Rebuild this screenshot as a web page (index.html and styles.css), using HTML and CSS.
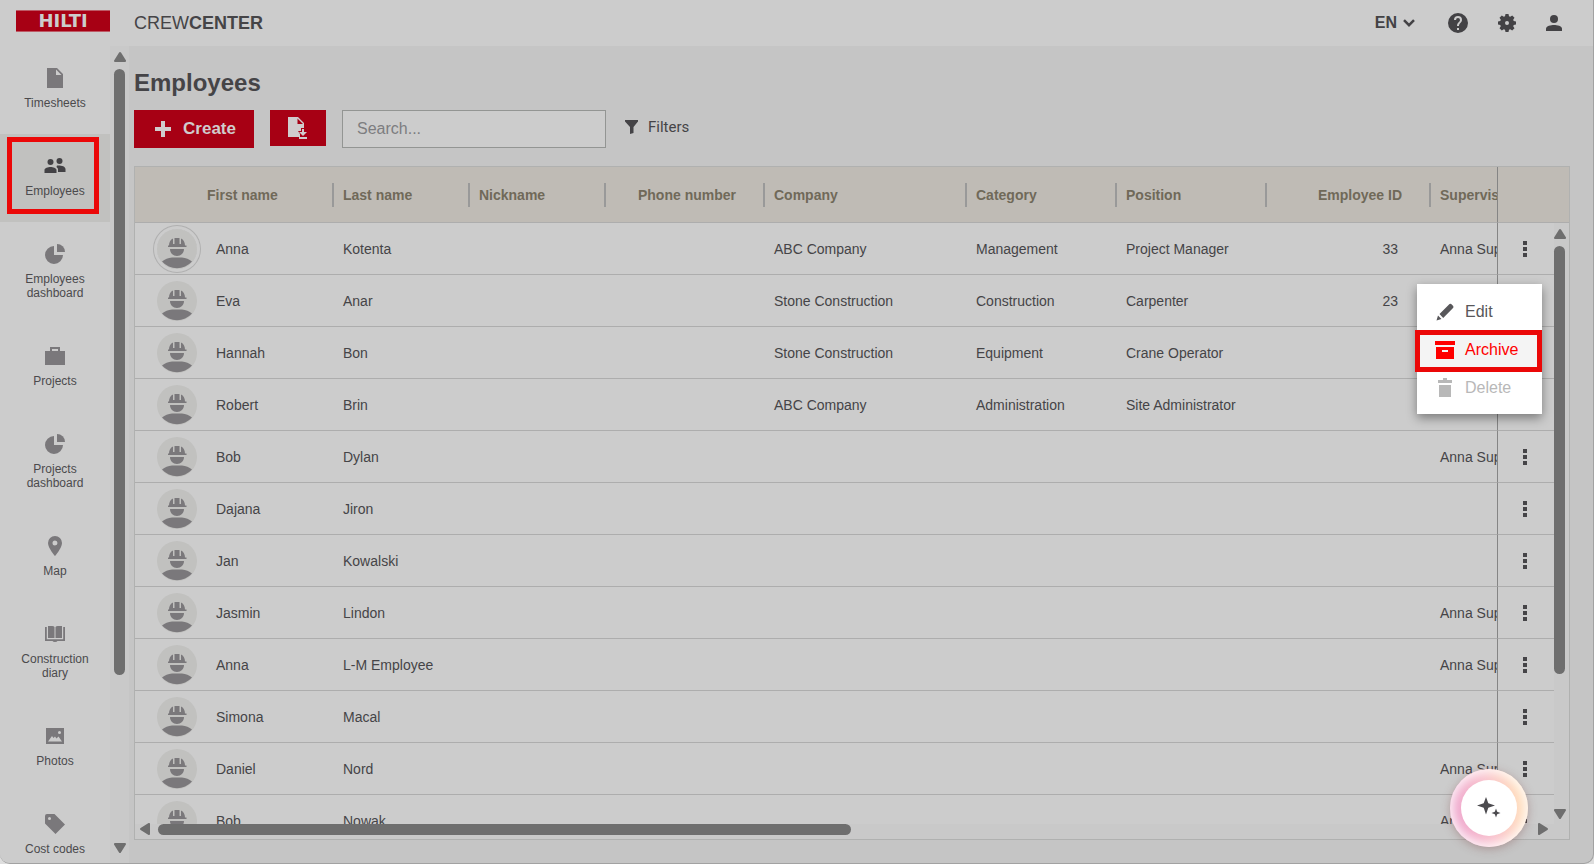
FILE: index.html
```html
<!DOCTYPE html>
<html lang="en">
<head>
    <meta charset="UTF-8">
    <meta name="viewport" content="width=device-width, initial-scale=1.0">
    <title>Crewcenter - Employees</title>
    <link rel="stylesheet" href="styles.css">
</head>
<body>
    <!-- Shared icons -->
    <svg class="sprite" aria-hidden="true">
        <symbol id="i-pie" viewBox="0 0 20 20">
            <path d="M9 2v9h9a9 9 0 1 1-9-9z"/>
            <path d="M12 0a8 8 0 0 1 8 8h-8z"/>
        </symbol>
        <symbol id="i-worker" viewBox="0 0 40 40">
            <circle cx="20" cy="20" r="20" fill="#c1c1bf"/>
            <path d="M11 18v-1.500h1c0-3 1.500-6 4-7V15h1.500V9h5v6H24V9.500c2.500 1 4 4 4 7h1.500V18H11zM13 20h14c0 4-3 7-7 7s-7-3-7-7z"/>
            <path d="M5 32.500c3-2.500 6-3.500 10-4h10c4 .5 7 1.500 10 4A20 20 0 0 1 5 32.500z"/>
        </symbol>
        <symbol id="i-dots" viewBox="0 0 4 16">
            <path d="M0 0h4v4H0zM0 6h4v4H0zM0 12h4v4H0z"/>
        </symbol>
        <symbol id="i-arrow" viewBox="0 0 12 10">
            <path d="M6 0q.6 0 1 .6l5 8Q12.200 10 11 10H1Q-.2 10 .1 8.600l5-8Q5.400 0 6 0z"/>
        </symbol>
    </svg>

    <div class="app">
        <header class="topbar">
            <a class="logo" href="#">HILTI</a>
            <span class="product">CREW<b>CENTER</b></span>
            <div class="topbar-tools">
                <button class="lang" type="button">EN
                    <svg width="12" height="8" viewBox="0 0 12 8"><path d="M1 1.200l5 5 5-5" fill="none" stroke="currentColor" stroke-width="2.500"/></svg>
                </button>
                <button type="button" aria-label="Help">
                    <svg width="20" height="20" viewBox="2 2 20 20"><path d="M12 2a10 10 0 1 0 0 20 10 10 0 0 0 0-20zm1 17h-2v-2h2zm2.070-7.750-.9.920C13.450 12.900 13 13.500 13 15h-2v-.5c0-1.100.45-2.100 1.170-2.830l1.240-1.260c.37-.36.59-.86.59-1.410a2 2 0 0 0-4 0H8a4 4 0 0 1 8 0c0 .88-.36 1.680-.93 2.250z"/></svg>
                </button>
                <button type="button" aria-label="Settings">
                    <svg width="18" height="18" viewBox="0 0 18 18"><path fill-rule="evenodd" d="M7.500 0h3l.5 2.300 1.200.5L14.200 1.500l2.300 2.300-1.300 2 .5 1.200 2.300.5v3l-2.300.5-.5 1.200 1.300 2-2.300 2.300-2-1.300-1.200.5-.5 2.300h-3L7 15.700l-1.200-.5-2 1.300-2.300-2.300 1.300-2L2.300 11 0 10.500v-3L2.300 7l.5-1.200-1.300-2 2.300-2.300 2 1.300L7 2.300zM9 7a2 2 0 1 0 0 4 2 2 0 0 0 0-4z"/></svg>
                </button>
                <button type="button" aria-label="Account">
                    <svg width="16" height="16" viewBox="0 0 16 16"><circle cx="8" cy="4" r="4"/><path d="M0 16v-2.500C0 11 5 10 8 10s8 1 8 3.500V16z"/></svg>
                </button>
            </div>
        </header>

        <div class="layout">
            <nav class="sidebar">
                <a class="nav-item" href="#">
                    <svg viewBox="0 0 20 20"><path fill-rule="evenodd" d="M2 0h10l6 6v14H2zM11 1.500V7h5.500z"/></svg>
                    <span>Timesheets</span>
                </a>
                <a class="nav-item active marked" href="#">
                    <svg class="wide" viewBox="0 0 22 20"><circle cx="6.500" cy="6" r="3"/><circle cx="15.500" cy="5" r="3"/><path d="M.5 17v-3c0-2 3.500-3 6-3s6 1 6 3v3zM13 9.500c3-.5 8.500.5 8.500 3.500v3H14v-2.500c0-1.500-1-2-1.500-2.500z"/></svg>
                    <span>Employees</span>
                </a>
                <a class="nav-item" href="#">
                    <svg><use href="#i-pie"/></svg>
                    <span>Employees dashboard</span>
                </a>
                <a class="nav-item" href="#">
                    <svg viewBox="0 0 20 20"><path fill-rule="evenodd" d="M5 1h10v4h5v14H0V5h5zM7 3v2h6V3z"/></svg>
                    <span>Projects</span>
                </a>
                <a class="nav-item" href="#">
                    <svg><use href="#i-pie"/></svg>
                    <span>Projects dashboard</span>
                </a>
                <a class="nav-item" href="#">
                    <svg viewBox="0 0 20 20"><path fill-rule="evenodd" d="M10 0a7 7 0 0 1 7 7c0 5-7 13-7 13S3 12 3 7a7 7 0 0 1 7-7zm0 4.500a2.500 2.500 0 1 0 0 5 2.500 2.500 0 0 0 0-5z"/></svg>
                    <span>Map</span>
                </a>
                <a class="nav-item" href="#">
                    <svg viewBox="0 0 20 20"><path d="M3 2h4q2 0 2.500 1v11Q9 14 7 14H3zM17 2h-4q-2 0-2.500 1v11q.5 0 2.500 0h4zM0 3h1.800v12.200h16.400V3H20v14h-7.500q-.5 1-2.500 1t-2.500-1H0z"/></svg>
                    <span>Construction diary</span>
                </a>
                <a class="nav-item" href="#">
                    <svg viewBox="0 0 20 20"><path fill-rule="evenodd" d="M1 2h18v16H1zM3 15.500h14l-3.500-5-2 2-1.500-2-1.500 1.500-1.500-2zM14.500 5a1.500 1.500 0 1 0 0 3 1.500 1.500 0 0 0 0-3z"/></svg>
                    <span>Photos</span>
                </a>
                <a class="nav-item" href="#">
                    <svg viewBox="0 0 20 20"><path fill-rule="evenodd" d="M2 0h7.500L20 10.500 10.500 20 0 9.500V2q0-2 2-2zm2.500 3a1.500 1.500 0 1 0 0 3 1.500 1.500 0 0 0 0-3z"/></svg>
                    <span>Cost codes</span>
                </a>
            </nav>
            <div class="scroll-v scroll-nav">
                <svg class="arrow"><use href="#i-arrow"/></svg>
                <div class="track"><div class="thumb"></div></div>
                <svg class="arrow down"><use href="#i-arrow"/></svg>
            </div>

            <main class="content">
                <h1>Employees</h1>
                <div class="toolbar">
                    <button class="btn btn-create" type="button">
                        <svg width="16" height="16" viewBox="0 0 16 16"><path d="M6 0h4v6h6v4h-6v6H6v-6H0V6h6z"/></svg>
                        Create
                    </button>
                    <button class="btn btn-export" type="button" aria-label="Export">
                        <svg width="20" height="22" viewBox="0 0 20 22"><path fill-rule="evenodd" d="M0 0h10l6 6v5h-3v3h-3l2 3v3H0zM9.500 1.500V7H15z"/><path d="M14 12h2v3h3l-4 4-4-4h3zM11 20h8v2h-8z"/></svg>
                    </button>
                    <input class="search" type="text" placeholder="Search..." aria-label="Search">
                    <button class="filters" type="button">
                        <svg width="13" height="14" viewBox="0 0 13 14"><path d="M0 0h13v1.500L8.500 7v6L5 14V7L0 1.500z"/></svg>
                        Filters
                    </button>
                </div>

                <div class="frame">
                    <div class="view">
                        <table class="employees">
                            <colgroup>
                                <col class="c-first"><col class="c-name"><col class="c-name"><col class="c-phone"><col class="c-company"><col class="c-mid"><col class="c-mid"><col class="c-id"><col><col class="c-actions"><col class="c-scroll">
                            </colgroup>
                            <thead>
                                <tr>
                                    <th class="first">First name</th>
                                    <th>Last name</th>
                                    <th>Nickname</th>
                                    <th class="num">Phone number</th>
                                    <th>Company</th>
                                    <th>Category</th>
                                    <th>Position</th>
                                    <th class="num">Employee ID</th>
                                    <th class="last">Supervisor</th>
                                    <th class="actions"></th>
                                    <th class="gutter"></th>
                                </tr>
                            </thead>
                            <tbody>
                                <tr>
                                    <td><div class="person"><svg class="avatar ring"><use href="#i-worker"/></svg>Anna</div></td>
                                    <td>Kotenta</td><td></td><td></td><td>ABC Company</td><td>Management</td><td>Project Manager</td><td class="num">33</td><td>Anna Supervisor</td>
                                    <td class="actions"><button type="button" aria-label="Actions"><svg><use href="#i-dots"/></svg></button></td><td class="gutter"></td>
                                </tr>
                                <tr>
                                    <td><div class="person"><svg class="avatar"><use href="#i-worker"/></svg>Eva</div></td>
                                    <td>Anar</td><td></td><td></td><td>Stone Construction</td><td>Construction</td><td>Carpenter</td><td class="num">23</td><td></td>
                                    <td class="actions"></td><td class="gutter"></td>
                                </tr>
                                <tr>
                                    <td><div class="person"><svg class="avatar"><use href="#i-worker"/></svg>Hannah</div></td>
                                    <td>Bon</td><td></td><td></td><td>Stone Construction</td><td>Equipment</td><td>Crane Operator</td><td></td><td></td>
                                    <td class="actions"></td><td class="gutter"></td>
                                </tr>
                                <tr>
                                    <td><div class="person"><svg class="avatar"><use href="#i-worker"/></svg>Robert</div></td>
                                    <td>Brin</td><td></td><td></td><td>ABC Company</td><td>Administration</td><td>Site Administrator</td><td></td><td></td>
                                    <td class="actions"></td><td class="gutter"></td>
                                </tr>
                                <tr>
                                    <td><div class="person"><svg class="avatar"><use href="#i-worker"/></svg>Bob</div></td>
                                    <td>Dylan</td><td></td><td></td><td></td><td></td><td></td><td></td><td>Anna Supervisor</td>
                                    <td class="actions"><button type="button" aria-label="Actions"><svg><use href="#i-dots"/></svg></button></td><td class="gutter"></td>
                                </tr>
                                <tr>
                                    <td><div class="person"><svg class="avatar"><use href="#i-worker"/></svg>Dajana</div></td>
                                    <td>Jiron</td><td></td><td></td><td></td><td></td><td></td><td></td><td></td>
                                    <td class="actions"><button type="button" aria-label="Actions"><svg><use href="#i-dots"/></svg></button></td><td class="gutter"></td>
                                </tr>
                                <tr>
                                    <td><div class="person"><svg class="avatar"><use href="#i-worker"/></svg>Jan</div></td>
                                    <td>Kowalski</td><td></td><td></td><td></td><td></td><td></td><td></td><td></td>
                                    <td class="actions"><button type="button" aria-label="Actions"><svg><use href="#i-dots"/></svg></button></td><td class="gutter"></td>
                                </tr>
                                <tr>
                                    <td><div class="person"><svg class="avatar"><use href="#i-worker"/></svg>Jasmin</div></td>
                                    <td>Lindon</td><td></td><td></td><td></td><td></td><td></td><td></td><td>Anna Supervisor</td>
                                    <td class="actions"><button type="button" aria-label="Actions"><svg><use href="#i-dots"/></svg></button></td><td class="gutter"></td>
                                </tr>
                                <tr>
                                    <td><div class="person"><svg class="avatar"><use href="#i-worker"/></svg>Anna</div></td>
                                    <td>L-M Employee</td><td></td><td></td><td></td><td></td><td></td><td></td><td>Anna Supervisor</td>
                                    <td class="actions"><button type="button" aria-label="Actions"><svg><use href="#i-dots"/></svg></button></td><td class="gutter"></td>
                                </tr>
                                <tr>
                                    <td><div class="person"><svg class="avatar"><use href="#i-worker"/></svg>Simona</div></td>
                                    <td>Macal</td><td></td><td></td><td></td><td></td><td></td><td></td><td></td>
                                    <td class="actions"><button type="button" aria-label="Actions"><svg><use href="#i-dots"/></svg></button></td><td class="gutter"></td>
                                </tr>
                                <tr>
                                    <td><div class="person"><svg class="avatar"><use href="#i-worker"/></svg>Daniel</div></td>
                                    <td>Nord</td><td></td><td></td><td></td><td></td><td></td><td></td><td>Anna Supervisor</td>
                                    <td class="actions"><button type="button" aria-label="Actions"><svg><use href="#i-dots"/></svg></button></td><td class="gutter"></td>
                                </tr>
                                <tr>
                                    <td><div class="person"><svg class="avatar"><use href="#i-worker"/></svg>Bob</div></td>
                                    <td>Nowak</td><td></td><td></td><td></td><td></td><td></td><td></td><td>Anna Supervisor</td>
                                    <td class="actions"><button type="button" aria-label="Actions"><svg><use href="#i-dots"/></svg></button></td><td class="gutter"></td>
                                </tr>
                            </tbody>
                        </table>
                        <div class="scroll-v scroll-table">
                            <svg class="arrow"><use href="#i-arrow"/></svg>
                            <div class="track"><div class="thumb"></div></div>
                            <svg class="arrow down"><use href="#i-arrow"/></svg>
                        </div>
                    </div>
                    <div class="scroll-h">
                        <svg class="arrow left"><use href="#i-arrow"/></svg>
                        <div class="track"><div class="thumb"></div></div>
                        <svg class="arrow right"><use href="#i-arrow"/></svg>
                    </div>

                    <div class="menu">
                        <button type="button">
                            <svg viewBox="0 0 20 20"><path d="M1.500 18.500L3 13.500l3.500 3.500zM4.500 12L14 2.500q1-1.200 2.200-.4l2 2q.8 1.200-.4 2.200L8.200 16z"/></svg>
                            Edit
                        </button>
                        <button class="archive" type="button">
                            <svg viewBox="0 0 20 20"><path fill-rule="evenodd" d="M0 1h20v4H0zM1 7h18v12H1zM7 10v2h6v-2z"/></svg>
                            Archive
                        </button>
                        <button type="button" disabled>
                            <svg viewBox="0 0 20 20"><path d="M3 2h5V0h4v2h5v3H3zM4 7h12v12H4z"/></svg>
                            Delete
                        </button>
                    </div>
                </div>
            </main>
        </div>
        <button class="assistant" type="button" aria-label="Assistant">
            <span><svg width="24" height="22" viewBox="0 0 24 22"><path d="M9 0l2.300 6.200L18 8.500l-6.700 2.300L9 17.500l-2.300-6.700L0 8.500l6.700-2.300zM19 11.500l1.200 3.300 3.300 1.200-3.300 1.200L19 20.500l-1.200-3.300-3.300-1.200 3.300-1.200z"/></svg></span>
        </button>
    </div>
</body>
</html>
```
FILE: styles.css
```css
* {
    box-sizing: border-box;
}
body {
    margin: 0;
    background-color: #dedede;
    color: #454447;
    font-family: "Liberation Sans", Arial, sans-serif;
    font-size: 14px;
}
button {
    padding: 0;
    border: 0;
    background: none;
    color: inherit;
    font: inherit;
    cursor: pointer;
}
svg {
    display: block;
    flex: none;
    fill: currentColor;
}
.sprite {
    position: absolute;
    width: 0;
    height: 0;
}
.app {
    height: 100vh;
    display: flex;
    flex-direction: column;
    overflow: hidden;
    background-color: #c5c5c5;
    border: solid #a2a2a2;
    border-width: 0 1px 1px 0;
    border-radius: 0 0 10px 10px;
}

/* Top bar */
.topbar {
    flex: none;
    height: 46px;
    display: flex;
    align-items: center;
    padding: 0 31px 0 16px;
    background-color: #ccc;
}
.logo {
    width: 94px;
    height: 22px;
    margin: 0 24px 4px 0;
    border: solid #bd5a66;
    border-width: 1px 0;
    background-color: #a70014;
    color: #ccc;
    font: bold 18px/20px "DejaVu Sans", sans-serif;
    text-align: center;
    text-decoration: none;
}
.product {
    font-size: 18px;
}
.topbar-tools {
    margin-left: auto;
    display: flex;
    align-items: center;
    gap: 30px;
    color: #434245;
}
.lang {
    display: flex;
    align-items: center;
    gap: 6px;
    margin-right: 3px;
    font-size: 16px;
    font-weight: bold;
}

/* Sidebar */
.layout {
    flex: 1;
    min-height: 0;
    display: flex;
}
.sidebar {
    flex: none;
    width: 110px;
    overflow: hidden;
    background-color: #ccc;
}
.nav-item {
    position: relative;
    display: flex;
    flex-direction: column;
    align-items: center;
    gap: 8px;
    padding: 22px 16px 24px;
    color: #4b4a4c;
    font-size: 12px;
    line-height: 14px;
    text-align: center;
    text-decoration: none;
}
.nav-item svg {
    width: 20px;
    height: 20px;
    color: #7a787b;
}
.nav-item svg.wide {
    width: 22px;
}
.nav-item.active {
    background-color: #c1c1bf;
}
.nav-item.active svg {
    color: #434245;
}
.marked::after {
    content: "";
    position: absolute;
    inset: 3px 11px 8px 7px;
    border: 5px solid #eb0808;
}

/* Scrollbars */
.scroll-v {
    display: flex;
    flex-direction: column;
    align-items: center;
    background-color: #c9c9c9;
    color: #6e6e6e;
}
.arrow {
    width: 12px;
    height: 10px;
}
.arrow.down {
    transform: rotate(180deg);
}
.arrow.left {
    transform: rotate(-90deg);
}
.arrow.right {
    transform: rotate(90deg);
}
.track {
    flex: 1;
}
.thumb {
    width: 11px;
    border-radius: 6px;
    background-color: #6e6e6e;
}
.scroll-nav {
    flex: none;
    width: 19px;
    padding: 6px 0 10px;
}
.scroll-nav .track {
    padding: 7px 0;
}
.scroll-nav .thumb {
    height: 79%;
}
.scroll-table {
    position: absolute;
    top: 56px;
    right: 0;
    bottom: 0;
    width: 15px;
    align-items: flex-start;
    padding: 6px 0 5px;
}
.scroll-table .track {
    padding: 7px 0;
}
.scroll-table .thumb {
    height: 77%;
}
.scroll-h {
    flex: none;
    height: 15px;
    display: flex;
    padding: 0 20px 0 4px;
    background-color: #c9c9c9;
    color: #6e6e6e;
}
.scroll-h .track {
    padding: 0 20px 0 7px;
}
.scroll-h .thumb {
    width: 51%;
    height: 11px;
}

/* Page content */
.content {
    flex: 1;
    min-width: 0;
    display: flex;
    flex-direction: column;
    padding: 22px 23px 23px 5px;
}
h1 {
    margin: 0 0 12px;
    font-size: 24px;
    line-height: 30px;
}
.toolbar {
    display: flex;
    align-items: flex-start;
    gap: 16px;
    margin-bottom: 18px;
}
.btn {
    display: flex;
    align-items: center;
    justify-content: center;
    background-color: #a70014;
    color: #d0cccd;
}
.btn-create {
    width: 120px;
    height: 38px;
    padding-left: 3px;
    gap: 12px;
    font-size: 17px;
    font-weight: bold;
}
.btn-export {
    width: 56px;
    height: 36px;
}
.search {
    width: 264px;
    height: 38px;
    padding: 0 14px;
    border: 1px solid #939593;
    border-radius: 0;
    background-color: #ccc;
    color: #454447;
    font: inherit;
    font-size: 16px;
}
.search::placeholder {
    color: #7d7d80;
}
.filters {
    height: 34px;
    display: flex;
    align-items: center;
    gap: 10px;
    margin-left: 3px;
    font-family: Roboto, sans-serif;
    font-size: 15px;
}

/* Employee table */
.frame {
    position: relative;
    flex: 1;
    min-height: 0;
    display: flex;
    flex-direction: column;
    border: 1px solid #b0b1b0;
    background-color: #ccc;
}
.view {
    position: relative;
    flex: 1;
    min-height: 0;
    overflow: hidden;
}
.employees {
    width: 100%;
    table-layout: fixed;
    border-collapse: separate;
    border-spacing: 0;
}
.c-first { width: 199px; }
.c-name { width: 136px; }
.c-phone { width: 159px; }
.c-company { width: 202px; }
.c-mid { width: 150px; }
.c-id { width: 164px; }
.c-actions { width: 57px; }
.c-scroll { width: 15px; }
.employees th,
.employees td {
    padding: 0 0 0 9px;
    overflow: hidden;
    border-bottom: 1px solid #adadad;
    text-align: left;
    white-space: nowrap;
}
.employees th {
    height: 56px;
    background: linear-gradient(#999, #999) right center / 2px 24px no-repeat #bfbbb5;
    color: #706959;
}
.employees td {
    height: 52px;
}
.employees th.first {
    padding-left: 72px;
}
.employees th.last,
.employees th.actions,
.employees th.gutter {
    background-image: none;
}
.employees th.num {
    padding-right: 29px;
    text-align: right;
}
.employees td.num {
    padding-right: 33px;
    text-align: right;
}
.employees .actions {
    padding: 0 2px 0 0;
    border-left: 1px solid #858585;
}
.employees td.gutter {
    border-bottom: 0;
}
.employees td:first-child {
    padding-left: 22px;
}
.person {
    display: flex;
    align-items: center;
    gap: 19px;
}
.avatar {
    width: 40px;
    height: 40px;
    color: #7a787b;
}
.avatar.ring {
    border-radius: 50%;
    box-shadow: 0 0 0 3px #ccc, 0 0 0 4px #b0b0b0;
}
.actions button {
    display: flex;
    align-items: center;
    justify-content: center;
    width: 100%;
    height: 40px;
}
.actions svg {
    width: 4px;
    height: 16px;
}

/* Row menu */
.menu {
    position: absolute;
    top: 117px;
    right: 27px;
    width: 125px;
    padding: 9px 0 7px;
    background-color: #fff;
    box-shadow: 0 4px 10px rgba(0,0,0,0.4);
}
.menu button {
    position: relative;
    display: flex;
    align-items: center;
    gap: 10px;
    width: 100%;
    height: 38px;
    padding: 0 18px;
    color: #58575a;
    font-size: 16px;
}
.menu svg {
    width: 20px;
    height: 20px;
}
.menu button.archive {
    background-color: #f4f4f4;
    color: #f00;
}
.menu button:disabled {
    color: #b8b8b8;
}
.archive::after {
    content: "";
    position: absolute;
    inset: -1px 0 -3px -2px;
    border: 5px solid #eb0808;
}

/* Assistant button */
.assistant {
    position: absolute;
    right: 66px;
    bottom: 17px;
    width: 78px;
    height: 78px;
    display: flex;
    align-items: center;
    justify-content: center;
    border-radius: 50%;
    background: linear-gradient(80deg, #efa6cb 15%, #f9c2cd 50%, #ffdcbc 85%);
    box-shadow: inset 0 0 10px 4px rgba(255,255,255,0.8), 0 2px 10px rgba(120,60,60,0.35);
}
.assistant span {
    width: 56px;
    height: 56px;
    display: flex;
    align-items: center;
    justify-content: center;
    border-radius: 50%;
    background-color: #fff;
    color: #4c4b4f;
}
```
